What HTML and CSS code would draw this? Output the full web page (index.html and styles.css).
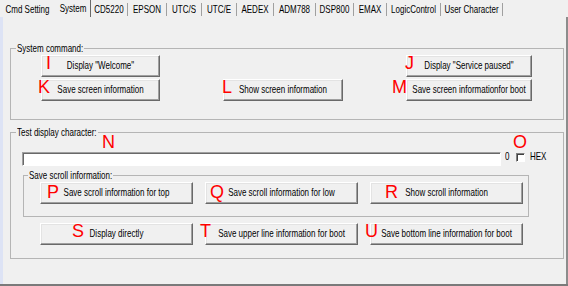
FILE: index.html
```html
<!DOCTYPE html>
<html lang="en">
<head>
<meta charset="utf-8">
<title>System</title>
<link rel="stylesheet" href="styles.css">
</head>
<body>
<div class="window">
  <div class="tabs">
    <div class="tab tab-first"><span class="txt">Cmd Setting</span></div>
    <div class="tab active"><span class="txt">System</span></div>
    <div class="tab"><span class="txt">CD5220</span></div>
    <div class="tab"><span class="txt">EPSON</span></div>
    <div class="tab"><span class="txt">UTC/S</span></div>
    <div class="tab"><span class="txt">UTC/E</span></div>
    <div class="tab"><span class="txt">AEDEX</span></div>
    <div class="tab"><span class="txt">ADM788</span></div>
    <div class="tab"><span class="txt">DSP800</span></div>
    <div class="tab"><span class="txt">EMAX</span></div>
    <div class="tab"><span class="txt">LogicControl</span></div>
    <div class="tab"><span class="txt">User Character</span></div>
  </div>

  <div class="page">
    <fieldset class="group group-cmd">
      <legend><span class="txt">System command:</span></legend>
      <div class="cmd-grid">
        <button class="btn"><span class="txt">Display &quot;Welcome&quot;</span></button>
        <button class="btn col-3"><span class="txt">Display &quot;Service paused&quot;</span></button>
        <button class="btn"><span class="txt">Save screen information</span></button>
        <button class="btn"><span class="txt">Show screen information</span></button>
        <button class="btn"><span class="txt">Save screen informationfor boot</span></button>
      </div>
    </fieldset>

    <fieldset class="group group-test">
      <legend><span class="txt">Test display character:</span></legend>
      <div class="text-row">
        <input class="text-in" type="text" value="">
        <span class="count"><span class="txt">0</span></span>
        <input class="check" type="checkbox">
        <span class="hex"><span class="txt">HEX</span></span>
      </div>

      <fieldset class="group group-scroll">
        <legend><span class="txt">Save scroll information:</span></legend>
        <div class="btn-row">
          <button class="btn"><span class="txt">Save scroll information for top</span></button>
          <button class="btn"><span class="txt">Save scroll information for low</span></button>
          <button class="btn"><span class="txt">Show scroll information</span></button>
        </div>
      </fieldset>

      <div class="btn-row btn-row-outer">
        <button class="btn"><span class="txt">Display directly</span></button>
        <button class="btn"><span class="txt">Save upper line information for boot</span></button>
        <button class="btn"><span class="txt">Save bottom line information for boot</span></button>
      </div>
    </fieldset>
  </div>

  <span class="mark m-i">I</span>
  <span class="mark m-j">J</span>
  <span class="mark m-k">K</span>
  <span class="mark m-l">L</span>
  <span class="mark m-m">M</span>
  <span class="mark m-n">N</span>
  <span class="mark m-o">O</span>
  <span class="mark m-p">P</span>
  <span class="mark m-q">Q</span>
  <span class="mark m-r">R</span>
  <span class="mark m-s">S</span>
  <span class="mark m-t">T</span>
  <span class="mark m-u">U</span>
</div>
</body>
</html>
```

FILE: styles.css
```css
html, body {
  margin: 0;
  padding: 0;
}

body {
  background: #f0f0f0;
  font-family: "Liberation Sans", Arial, sans-serif;
  font-size: 8px;
  color: #000;
}

.window {
  position: relative;
  width: 568px;
  height: 286px;
  box-sizing: border-box;
  border-bottom: 2px solid #7a7a7a;
  display: flex;
  flex-direction: column;
  overflow: hidden;
}

/* text is tall and narrow like the classic dialog font */
.txt {
  display: inline-block;
  transform: scaleY(1.3);
  white-space: nowrap;
}

/* ---------- tab strip ---------- */
.tabs {
  flex: none;
  height: 17px;
  display: grid;
  grid-template-columns: 56px 35px 37px 39px 35px 35px 37px 42px 38px 33px 54px 62px;
  align-items: start;
}

.tab {
  margin-top: 3px;
  height: 13px;
  line-height: 13px;
  text-align: center;
  border-right: 1px solid #a0a0a0;
  white-space: nowrap;
}

.tab-first {
  border-right-color: transparent;
}

.tab.active {
  margin-top: 0;
  height: 17px;
  box-sizing: border-box;
  padding-top: 2px;
  border-right-color: #696969;
}

/* ---------- tab page ---------- */
.page {
  flex: 1;
  border-left: 3px solid #dde3f5;
  border-right: 2px solid #8c8c8c;
  padding: 26px 2px 0 7px;
  display: flex;
  flex-direction: column;
}

.group {
  margin: 0;
  min-width: 0;
  border: 1px solid #b5b5b5;
  padding: 0 2px 0 5px;
}

.group legend {
  padding: 0 1px;
  line-height: 11px;
  height: 11px;
}

.group-cmd {
  padding-top: 1px;
  padding-bottom: 18px;
}

.group-test {
  margin-top: 7px;
  padding-top: 14px;
  padding-bottom: 13px;
}

.group-scroll {
  width: 506px;
  box-sizing: border-box;
  margin-top: 4px;
  margin-left: 7px;
  padding: 1px 0 12px 4px;
}

/* ---------- buttons ---------- */
.btn {
  display: flex;
  align-items: center;
  justify-content: center;
  height: 22px;
  box-sizing: border-box;
  margin: 0;
  padding: 0;
  font: inherit;
  line-height: 10px;
  color: #000;
  background: #f0f0f0;
  border: 1px solid;
  border-color: #ffffff #696969 #696969 #ffffff;
  box-shadow: inset -1px -1px 0 #a0a0a0, inset 1px 1px 0 #e3e3e3;
  overflow: visible;
  white-space: nowrap;
}

.cmd-grid {
  display: grid;
  grid-template-columns: 119px 120px 126px;
  column-gap: 63px;
  row-gap: 2px;
  margin-left: 25px;
}

.col-3 {
  grid-column: 3;
}

.btn-row {
  display: grid;
  grid-template-columns: repeat(3, 153px);
  column-gap: 12px;
  margin-left: 12px;
}

.btn-row-outer {
  margin-top: 6px;
  margin-left: 24px;
}

/* ---------- text row ---------- */
.text-row {
  display: flex;
  align-items: flex-start;
  margin-left: 6px;
  height: 14px;
}

.text-in {
  appearance: none;
  margin: 0;
  padding: 0;
  width: 479px;
  height: 14px;
  box-sizing: border-box;
  background: #fff;
  border: 1px solid;
  border-color: #a0a0a0 #ffffff #ffffff #a0a0a0;
  box-shadow: inset 1px 1px 0 #696969;
  font: inherit;
}

.count {
  width: 5px;
  margin-left: 4px;
  line-height: 10px;
}

.check {
  appearance: none;
  margin: 1px 0 0 6px;
  width: 9px;
  height: 9px;
  box-sizing: border-box;
  background: #fff;
  border: 1px solid;
  border-color: #808080 #ffffff #ffffff #808080;
  box-shadow: inset 1px 1px 0 #404040;
}

.hex {
  margin-left: 5px;
  line-height: 10px;
}

/* ---------- red annotation letters ---------- */
.mark {
  position: absolute;
  color: #ff0000;
  font-family: "Liberation Sans", Arial, sans-serif;
  font-size: 18px;
  line-height: 18px;
}

.m-i { left: 46px;  top: 54px; }
.m-j { left: 405px; top: 54px; }
.m-k { left: 38px;  top: 78px; }
.m-l { left: 222px; top: 78px; }
.m-m { left: 392px; top: 78px; }
.m-n { left: 102px; top: 133px; }
.m-o { left: 513px; top: 133px; }
.m-p { left: 47px;  top: 183px; }
.m-q { left: 210px; top: 183px; }
.m-r { left: 385px; top: 183px; }
.m-s { left: 72px;  top: 222px; }
.m-t { left: 200px; top: 222px; }
.m-u { left: 365px; top: 222px; }
```
